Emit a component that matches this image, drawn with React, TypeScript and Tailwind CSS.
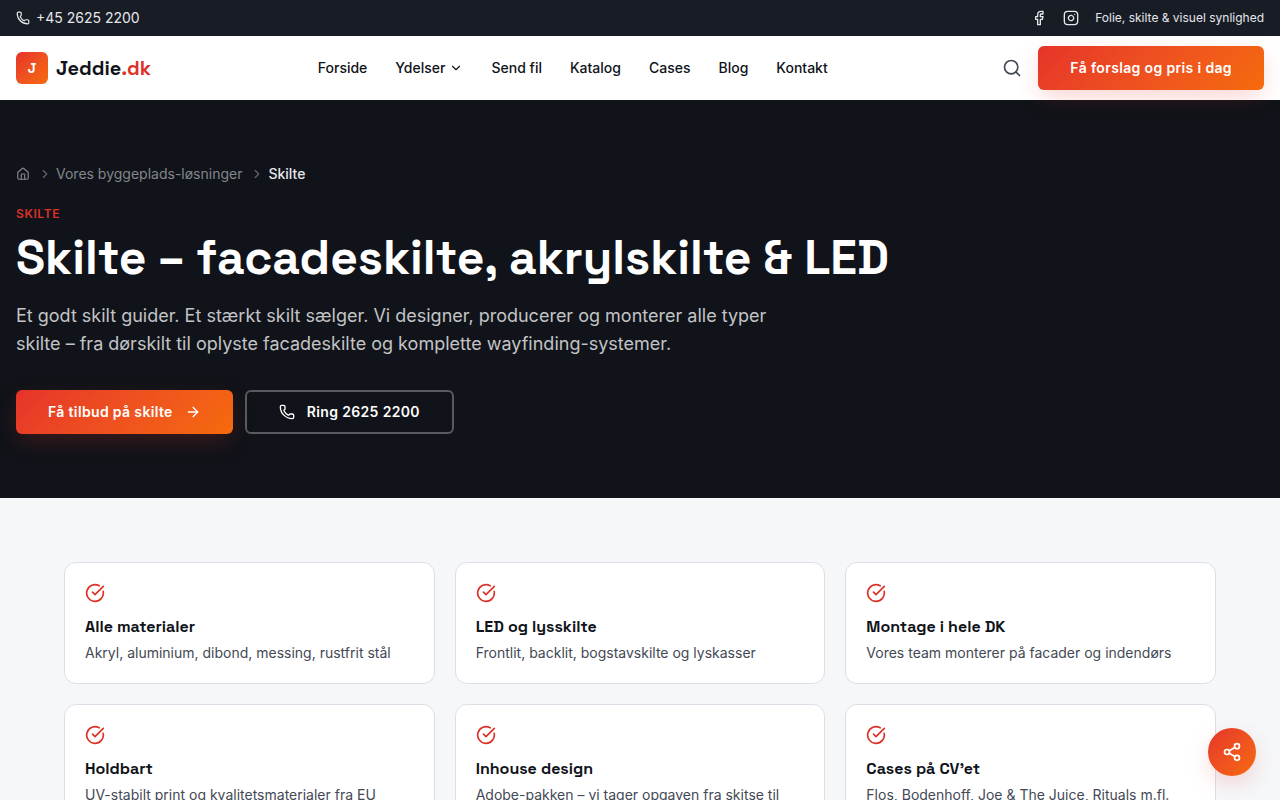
import {
  ArrowRight,
  ChevronDown,
  ChevronRight,
  CircleCheckBig,
  Facebook,
  House,
  Instagram,
  Phone,
  Search,
  Share2,
} from "lucide-react";

const navLinks = [
  { label: "Forside" },
  { label: "Ydelser", hasMenu: true },
  { label: "Send fil" },
  { label: "Katalog" },
  { label: "Cases" },
  { label: "Blog" },
  { label: "Kontakt" },
];

const features = [
  { title: "Alle materialer", text: "Akryl, aluminium, dibond, messing, rustfrit stål" },
  { title: "LED og lysskilte", text: "Frontlit, backlit, bogstavskilte og lyskasser" },
  { title: "Montage i hele DK", text: "Vores team monterer på facader og indendørs" },
  { title: "Holdbart", text: "UV-stabilt print og kvalitetsmaterialer fra EU" },
  { title: "Inhouse design", text: "Adobe-pakken – vi tager opgaven fra skitse til færdigt skilt" },
  { title: "Cases på CV’et", text: "Flos, Bodenhoff, Joe & The Juice, Rituals m.fl." },
];

function TopBar() {
  return (
    <div className="flex h-9 items-center justify-between bg-[#181c25] px-4 text-gray-200">
      <a href="tel:+4526252200" className="flex items-center gap-1.5 text-sm">
        <Phone size={14} />
        +45 2625 2200
      </a>
      <div className="flex items-center gap-4">
        <a href="#facebook" aria-label="Facebook">
          <Facebook size={16} />
        </a>
        <a href="#instagram" aria-label="Instagram">
          <Instagram size={16} />
        </a>
        <span className="text-xs">Folie, skilte &amp; visuel synlighed</span>
      </div>
    </div>
  );
}

function Header() {
  return (
    <header className="relative z-10 flex h-16 items-center justify-between bg-white px-4">
      <a href="#top" className="flex items-center gap-2">
        <span className="flex size-8 items-center justify-center rounded-md bg-linear-135 from-[#e63329] to-[#f66a0a] font-['Space_Grotesk','Inter',sans-serif] text-sm font-bold text-white">
          J
        </span>
        <span className="font-['Space_Grotesk','Inter',sans-serif] text-xl font-bold text-[#101319]">
          Jeddie<span className="text-[#dc3228]">.dk</span>
        </span>
      </a>
      <nav className="flex items-center gap-7 text-sm font-medium text-[#101319]">
        {navLinks.map((link) => (
          <a key={link.label} href="#nav" className="flex items-center gap-1">
            {link.label}
            {link.hasMenu && <ChevronDown size={14} />}
          </a>
        ))}
      </nav>
      <div className="flex items-center gap-2">
        <button type="button" aria-label="Søg" className="p-2 text-[#434955]">
          <Search size={20} />
        </button>
        <a
          href="#tilbud"
          className="flex h-11 items-center rounded-md bg-linear-135 from-[#e63329] to-[#f66a0a] px-8 text-sm font-semibold tracking-wide text-white shadow-[0_8px_24px_-4px_rgba(230,51,41,0.25)]"
        >
          Få forslag og pris i dag
        </a>
      </div>
    </header>
  );
}

function Hero() {
  return (
    <section className="bg-[#101319] px-4 py-16">
      <nav aria-label="Brødkrumme" className="flex items-center gap-2 text-sm text-[#83868c]">
        <a href="#top" aria-label="Forside">
          <House size={14} />
        </a>
        <span className="flex items-center gap-1">
          <ChevronRight size={14} className="text-[#63666c]" />
          <a href="#byggeplads">Vores byggeplads-løsninger</a>
        </span>
        <span className="flex items-center gap-1">
          <ChevronRight size={14} className="text-[#63666c]" />
          <span className="font-medium text-gray-200">Skilte</span>
        </span>
      </nav>
      <p className="mt-5 text-xs leading-5 font-semibold tracking-wider text-[#dc3228] uppercase">
        Skilte
      </p>
      <h1 className="mt-1.5 font-['Space_Grotesk','Inter',sans-serif] text-5xl leading-[56px] font-bold text-white">
        Skilte – facadeskilte, akrylskilte &amp; LED
      </h1>
      <p className="mt-4 max-w-3xl text-lg leading-7 text-[#c3c4c6]">
        Et godt skilt guider. Et stærkt skilt sælger. Vi designer, producerer og monterer alle typer
        skilte – fra dørskilt til oplyste facadeskilte og komplette wayfinding-systemer.
      </p>
      <div className="mt-8 flex flex-wrap gap-3 text-sm font-semibold tracking-wide text-white">
        <a
          href="#tilbud"
          className="flex h-11 items-center gap-3 rounded-md bg-linear-135 from-[#e63329] to-[#f66a0a] px-8 shadow-[0_8px_24px_-4px_rgba(230,51,41,0.25)]"
        >
          Få tilbud på skilte
          <ArrowRight size={16} />
        </a>
        <a
          href="tel:+4526252200"
          className="flex h-11 items-center gap-3 rounded-md border-2 border-[#585a5f] px-8"
        >
          <Phone size={16} />
          Ring 2625 2200
        </a>
      </div>
    </section>
  );
}

function Features() {
  return (
    <section className="bg-[#f5f7f9] py-16">
      <div className="mx-auto grid max-w-6xl grid-cols-3 gap-5">
        {features.map((feature) => (
          <article key={feature.title} className="rounded-xl border border-[#dcdfe5] bg-white p-5">
            <CircleCheckBig size={20} className="mb-3 text-[#dc3228]" />
            <h3 className="font-['Space_Grotesk','Inter',sans-serif] text-base font-bold text-[#101319]">
              {feature.title}
            </h3>
            <p className="mt-1 text-sm text-[#434955]">{feature.text}</p>
          </article>
        ))}
      </div>
    </section>
  );
}

export default function App() {
  return (
    <div id="top" className="font-['Inter',sans-serif]">
      <TopBar />
      <Header />
      <main>
        <Hero />
        <Features />
      </main>
      <button
        type="button"
        aria-label="Del siden"
        className="fixed right-6 bottom-6 z-20 flex size-12 items-center justify-center rounded-full bg-linear-135 from-[#e63329] to-[#f66a0a] text-white shadow-[0_8px_24px_-4px_rgba(230,51,41,0.25)]"
      >
        <Share2 size={20} />
      </button>
    </div>
  );
}
